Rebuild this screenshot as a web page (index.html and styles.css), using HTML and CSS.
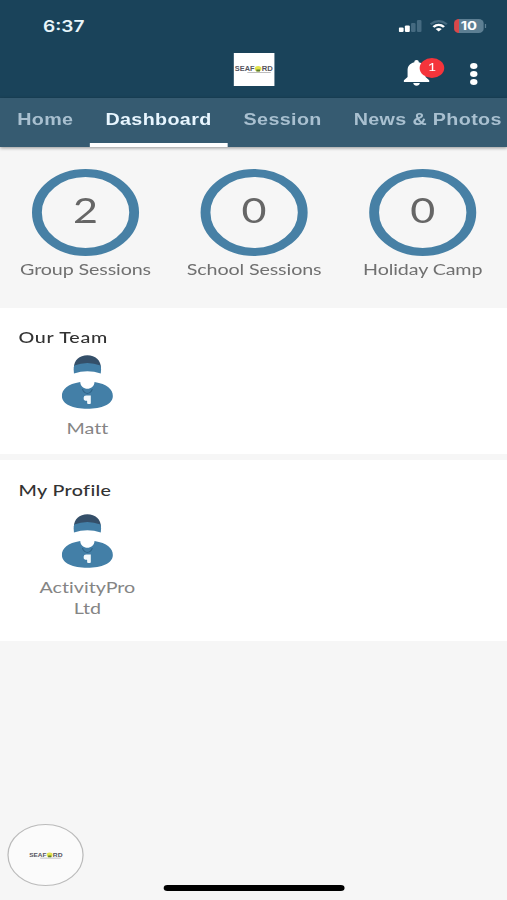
FILE: index.html
```html
<!DOCTYPE html>
<html lang="en">
<head>
  <meta charset="UTF-8">
  <title>Dashboard</title>
  <link rel="stylesheet" href="styles.css">
</head>
<body>
  <div class="screen">
    <header class="header">
      <div class="status">
        <span class="time">6:37</span>
        <svg class="signal" width="19" height="12" viewBox="0 0 19 12">
          <rect x="0" y="7.500" width="4" height="4.500" rx="1" fill="#fff"/>
          <rect x="5" y="5.500" width="4" height="6.500" rx="1" fill="#fff"/>
          <rect x="10" y="3" width="3.700" height="9" rx="1" fill="#456a80"/>
          <rect x="14.800" y="0" width="3.700" height="12" rx="1" fill="#456a80"/>
        </svg>
        <svg class="wifi" width="15" height="12" viewBox="0 0 15 12">
          <path d="M.9 4.200Q7.500 -2 14.100 4.200" fill="none" stroke="#456a80" stroke-width="2"/>
          <path d="M3.200 7Q7.500 2.700 11.800 7" fill="none" stroke="#fff" stroke-width="2.200"/>
          <path d="M7.500 11.600L5 9Q7.500 7 10 9z" fill="#fff"/>
        </svg>
        <div class="battery">10</div>
        <i class="battery-tip"></i>
      </div>
      <div class="toolbar">
        <svg class="logo" viewBox="0 0 33 33">
          <text x=".8" y="18.500" textLength="16" lengthAdjust="spacingAndGlyphs" class="logo-text">SEAF</text>
          <text x="22.700" y="18.500" textLength="9" lengthAdjust="spacingAndGlyphs" class="logo-text">RD</text>
          <circle cx="19.700" cy="15.800" r="2.700" fill="#e3e34c"/>
          <path d="M18.300 18.500V16.500H21.300V18.500z" fill="#5d7d2f"/>
          <path d="M11 19.500H30" stroke="#aaa" stroke-width=".7"/>
        </svg>
        <div class="actions">
          <div class="bell">
            <svg width="21" height="26" viewBox="0 0 21 26">
              <path d="M10.500 0C11.700 0 12.300 .9 12.300 2.300C16 3.300 17.800 6.500 17.800 10.500V17L21 20.500V22H0V20.500L3.200 17V10.500C3.200 6.500 5 3.300 8.700 2.300C8.700 .9 9.300 0 10.500 0z" fill="#fff"/>
              <path d="M7.800 23H13.200Q12.700 25.800 10.500 25.800T7.800 23z" fill="#fff"/>
            </svg>
            <span class="badge">1</span>
          </div>
          <div class="more"><i></i><i></i><i></i></div>
        </div>
      </div>
    </header>

    <nav class="tabs">
      <a class="tab">Home</a>
      <a class="tab active">Dashboard</a>
      <a class="tab">Session</a>
      <a class="tab">News &amp; Photos</a>
    </nav>

    <section class="stats">
      <div class="stat"><div class="ring">2</div><div class="label">Group Sessions</div></div>
      <div class="stat"><div class="ring">0</div><div class="label">School Sessions</div></div>
      <div class="stat"><div class="ring">0</div><div class="label">Holiday Camp</div></div>
    </section>

    <section class="card team">
      <h2>Our Team</h2>
      <div class="person">
        <svg class="avatar" viewBox="0 0 42 54">
          <g id="coach">
            <path d="M10 13C10 5 14.500 .2 21 .2S32 5 32 13z" fill="#344f69"/>
            <path d="M10.300 10.500Q21 5.500 31.700 10.500Q32.600 14 31.900 18.500Q21 14 10.100 18.500Q9.400 14 10.300 10.500z" fill="#437fa7"/>
            <path d="M15.200 27C5 29 .3 34.500 .3 41C.3 49.500 9.500 53.800 21 53.800S41.700 49.500 41.700 41C41.700 34.500 37 29 26.800 27C26.500 36 15.500 36 15.200 27z" fill="#437fa7"/>
            <path d="M17 34Q18 38 21 38.500Q24 38 25 34" fill="none" stroke="#2f6388" stroke-width="1"/>
            <path d="M18 42.500Q18 40.500 20 40.500H23.800V48.500Q22.500 49.500 20.800 48.500V45.800Q18 46 18 43.800z" fill="#f2f8fb"/>
          </g>
        </svg>
        <div class="name">Matt</div>
      </div>
    </section>

    <section class="card profile">
      <h2>My Profile</h2>
      <div class="person">
        <svg class="avatar" viewBox="0 0 42 54"><use href="#coach"/></svg>
        <div class="name">ActivityPro Ltd</div>
      </div>
    </section>

    <div class="fab">
      <svg width="29" height="29" viewBox="0 0 33 33">
        <text x=".8" y="18.500" textLength="16" lengthAdjust="spacingAndGlyphs" class="logo-text">SEAF</text>
        <text x="22.700" y="18.500" textLength="9" lengthAdjust="spacingAndGlyphs" class="logo-text">RD</text>
        <circle cx="19.700" cy="15.800" r="2.700" fill="#e3e34c"/>
        <path d="M18.300 18.500V16.500H21.300V18.500z" fill="#5d7d2f"/>
        <path d="M11 19.500H30" stroke="#aaa" stroke-width=".7"/>
      </svg>
    </div>
    <div class="home-bar"></div>
  </div>
</body>
</html>
```

FILE: styles.css
```css
* {
  box-sizing: border-box;
}
body {
  margin: 0;
  overflow: hidden;
  background: #f6f6f6;
  font-family: Lato, "Liberation Sans", sans-serif;
  font-variant-ligatures: none;
}
.screen {
  position: relative;
  width: 412px;
  height: 900px;
  transform: scaleX(1.2306);
  transform-origin: 0 0;
  background: #f6f6f6;
}
.header {
  height: 98px;
  background: #1a435a;
}
.status {
  display: flex;
  align-items: center;
  height: 52px;
  padding: 0 17px 0 35px;
  color: #e8f5fa;
}
.time {
  flex: 1;
  font: 600 15.5px Inter, sans-serif;
}
.wifi {
  margin: 0 5px 0 6px;
}
.battery {
  width: 24px;
  height: 14px;
  border-radius: 4px;
  background: linear-gradient(90deg, #d9484a 4px, #5d7f93 4px);
  color: #fff;
  font: 700 12px/14px Inter, sans-serif;
  text-align: center;
}
.battery-tip {
  width: 1px;
  height: 4px;
  margin-left: 1px;
  background: #5d7f93;
}
.toolbar {
  display: grid;
  grid-template-columns: 1fr 33px 1fr;
  padding: 1px 0 0;
}
.logo {
  grid-column: 2;
  width: 33px;
  height: 33px;
  background: #fff;
}
.logo-text {
  font: 700 7px "Liberation Sans", sans-serif;
  fill: #555560;
}
.actions {
  display: flex;
  justify-content: flex-end;
  align-items: flex-start;
  gap: 33px;
  padding: 7px 24px 0 0;
}
.bell {
  position: relative;
  height: 26px;
}
.badge {
  position: absolute;
  left: 13px;
  top: -2px;
  width: 20px;
  height: 20px;
  border-radius: 50%;
  background: #f5343b;
  color: #fff;
  font-size: 12px;
  line-height: 18px;
  text-align: center;
}
.more {
  display: grid;
  gap: 2px;
  padding-top: 3px;
}
.more i {
  width: 6px;
  height: 6px;
  border-radius: 50%;
  background: #fff;
}
.tabs {
  display: flex;
  height: 49px;
  padding-left: 1px;
  background: #365b71;
  box-shadow: 0 1px 3px rgba(0, 0, 0, .4);
}
.tab {
  flex: none;
  padding: 0 13px;
  border-bottom: 4px solid transparent;
  color: #a9c0d0;
  font: 700 16px/43px "Liberation Sans", sans-serif;
  letter-spacing: .3px;
}
.tab.active {
  color: #e8f6ff;
  border-color: #fff;
}
.stats {
  display: grid;
  grid-template-columns: repeat(3, 137px);
  height: 161px;
  padding: 22px 0 0 1px;
  text-align: center;
}
.ring {
  width: 87px;
  height: 87px;
  margin: 0 auto;
  border: 8px solid #4780a5;
  border-radius: 50%;
  color: #666;
  font-size: 35px;
  line-height: 64px;
}
.label {
  color: #707070;
  font-size: 16px;
  letter-spacing: -.1px;
  line-height: 26px;
  white-space: nowrap;
}
.card {
  padding: 18px 15px 0;
  background: #fff;
}
.card h2 {
  margin: 0;
  color: #333;
  font-size: 16px;
  font-weight: 500;
  letter-spacing: .3px;
  line-height: 24px;
}
.team {
  height: 146px;
  margin-bottom: 6px;
}
.team h2 {
  margin-top: -1px;
  letter-spacing: .6px;
}
.person {
  width: 90px;
  margin: 6px 0 0 11px;
  text-align: center;
}
.profile {
  height: 181px;
}
.profile .person {
  margin-top: 12px;
}
.avatar {
  display: block;
  width: 42px;
  height: 54px;
  margin: 0 auto;
}
.name {
  margin-top: 8px;
  color: #858585;
  font-size: 16px;
  line-height: 21px;
}
.fab {
  position: absolute;
  left: 6px;
  top: 824px;
  display: grid;
  place-items: center;
  width: 62px;
  height: 62px;
  border: 1px solid #bbb;
  border-radius: 50%;
  background: #fbfbfb;
}
.home-bar {
  position: absolute;
  left: 133px;
  bottom: 9px;
  width: 147px;
  height: 6px;
  border-radius: 3px;
  background: #000;
}
```
